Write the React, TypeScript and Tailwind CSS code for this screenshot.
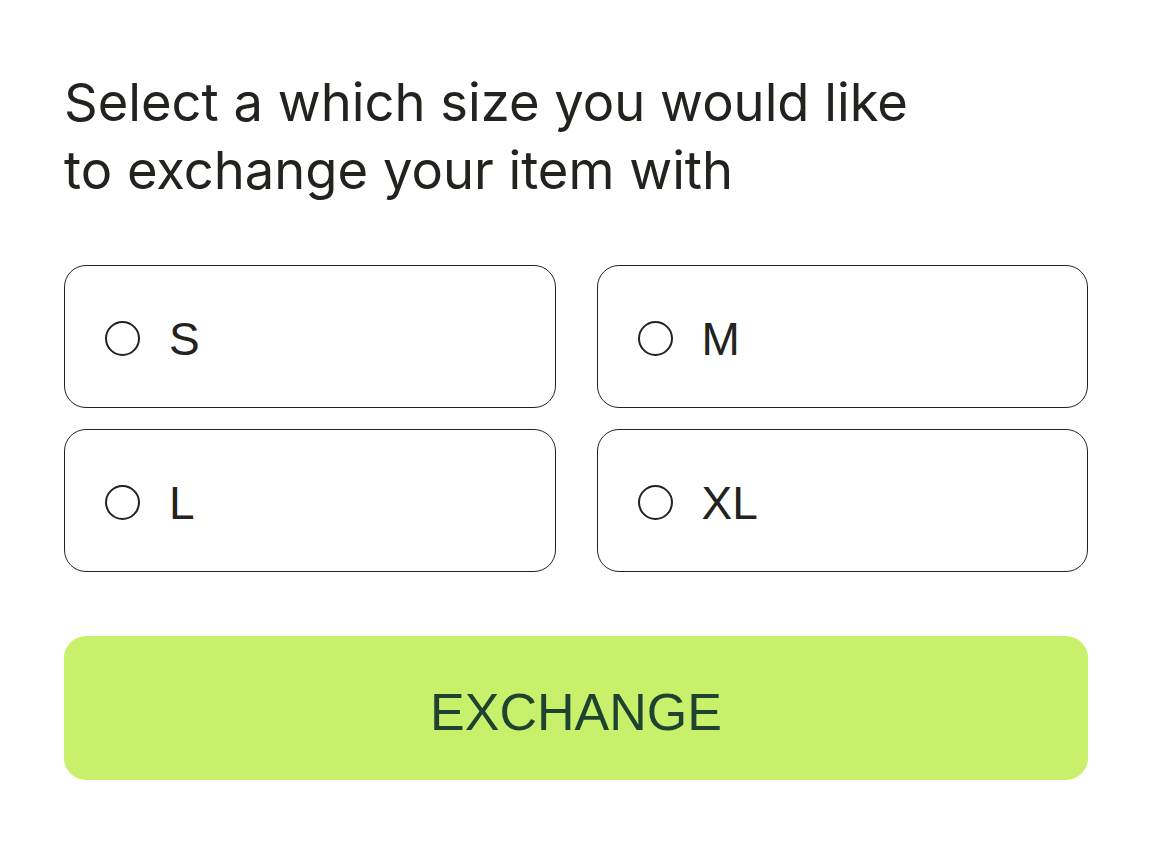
import React, { useState } from "react";

const sizes = ["S", "M", "L", "XL"];

export default function App() {
  const [selected, setSelected] = useState<string | null>(null);

  return (
    <div className="min-h-screen w-full bg-white px-16 pt-[68px] font-['Liberation_Sans',Arial,sans-serif]">
      <h1 className="font-['Inter',sans-serif] text-[52.5px] leading-[68px] text-[#22221e]">
        Select a which size you would like
        <br />
        to exchange your item with
      </h1>

      {/* size options */}
      <div className="mt-[61px] grid grid-cols-2 gap-x-[41px] gap-y-[21px]">
        {sizes.map((size) => (
          <button
            key={size}
            onClick={() => setSelected(size)}
            className="flex h-[143px] items-center gap-[29px] rounded-[22px] border border-[#222] bg-white pl-[40px] text-left"
          >
            <span className="mt-[3px] flex h-[35px] w-[35px] items-center justify-center rounded-full border-2 border-[#222]">
              {selected === size && (
                <span className="h-[19px] w-[19px] rounded-full bg-[#222]" />
              )}
            </span>
            <span className="pt-[5px] text-[46px] leading-none text-[#22221e]">{size}</span>
          </button>
        ))}
      </div>

      <button className="mt-[64px] flex h-[144px] w-full items-center justify-center rounded-[22px] bg-[#c9f06b] pt-[7px] text-[52px] text-[#1e4330]">
        EXCHANGE
      </button>
    </div>
  );
}
